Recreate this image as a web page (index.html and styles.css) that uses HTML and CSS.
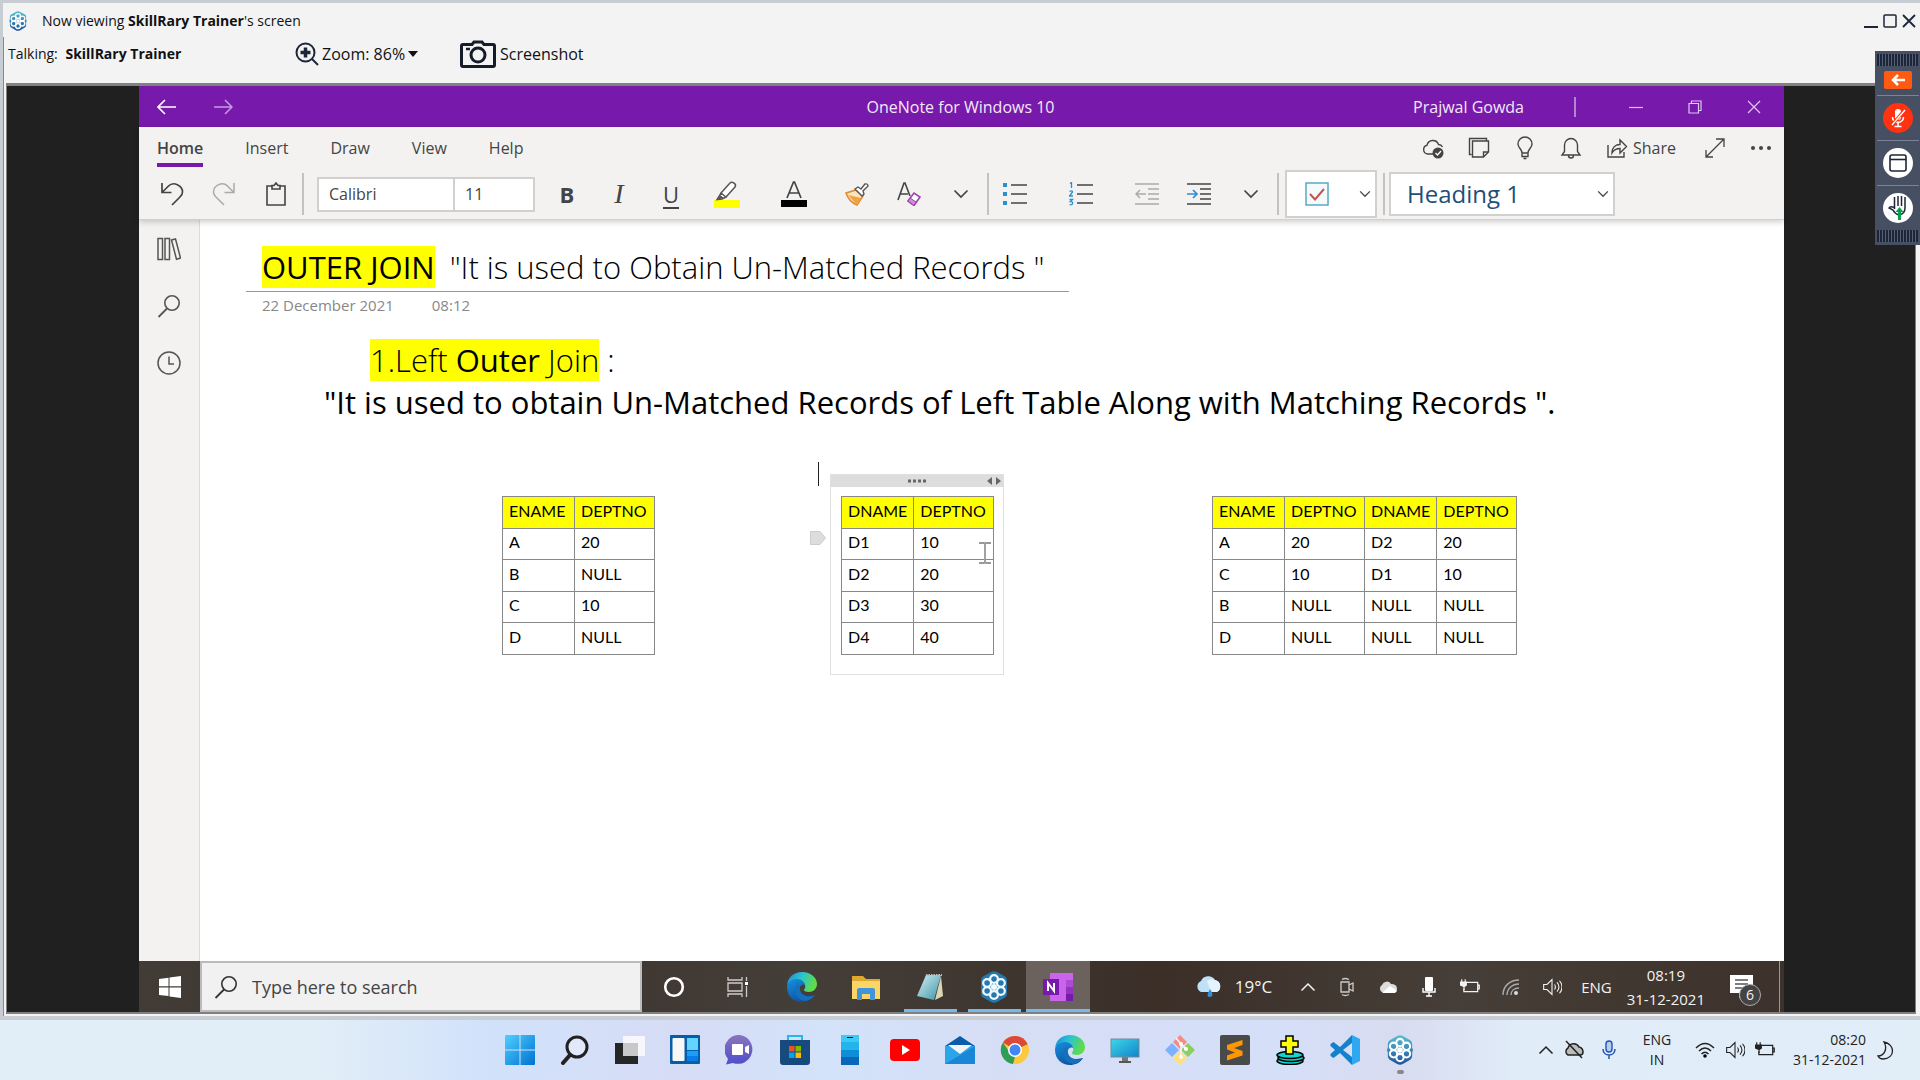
FILE: index.html
```html
<!DOCTYPE html>
<html lang="en">
<head>
<meta charset="utf-8">
<title>Now viewing SkillRary Trainer's screen</title>
<link rel="stylesheet" href="styles.css">
</head>
<body>
<svg class="defs" aria-hidden="true">
  <defs>
    <linearGradient id="edgeA" x1="0" y1="0" x2="1" y2="0.3"><stop offset="0" stop-color="#1d86d8"/><stop offset=".5" stop-color="#2bc3d2"/><stop offset="1" stop-color="#5fdc4a"/></linearGradient>
    <linearGradient id="edgeB" x1="0" y1="0" x2="0.6" y2="1"><stop offset="0" stop-color="#1490df"/><stop offset="1" stop-color="#0f4f9c"/></linearGradient>
    <linearGradient id="win" x1="0" y1="0" x2="1" y2="1"><stop offset="0" stop-color="#4fd0ff"/><stop offset="1" stop-color="#0071d0"/></linearGradient>
    <linearGradient id="chat" x1="0" y1="0" x2="0" y2="1"><stop offset="0" stop-color="#8a74bd"/><stop offset="1" stop-color="#4f4fcb"/></linearGradient>
    <linearGradient id="screen" x1="0" y1="0" x2="1" y2="1"><stop offset="0" stop-color="#3fd6e6"/><stop offset="1" stop-color="#0f84cd"/></linearGradient>
    <linearGradient id="hiveG" x1="0" y1="0" x2="0" y2="1"><stop offset="0" stop-color="#58bfd2"/><stop offset="1" stop-color="#1f519c"/></linearGradient>
    <linearGradient id="pad" x1="0" y1="0" x2="1" y2="1"><stop offset="0" stop-color="#d5f1f3"/><stop offset="1" stop-color="#3a93a8"/></linearGradient>
    <symbol id="chev" viewBox="0 0 16 10"><path d="M1.500 1.500 8 8l6.500-6.500" fill="none" stroke="currentColor" stroke-width="1.700"/></symbol>
    <symbol id="up" viewBox="0 0 16 10"><path d="M1.500 8.500 8 2l6.500 6.500" fill="none" stroke="currentColor" stroke-width="1.500"/></symbol>
    <symbol id="lens" viewBox="0 0 24 24"><circle cx="15" cy="9" r="7.200" fill="none" stroke="currentColor" stroke-width="1.600"/><path d="M10 14.500 1.500 23" stroke="currentColor" stroke-width="1.800"/></symbol>
    <symbol id="petals" viewBox="0 0 32 32"><g fill="none" stroke="currentColor" stroke-width="2.200"><circle cx="16" cy="8" r="3.900"/><circle cx="22.900" cy="12" r="3.900"/><circle cx="22.900" cy="20" r="3.900"/><circle cx="16" cy="24" r="3.900"/><circle cx="9.100" cy="20" r="3.900"/><circle cx="9.100" cy="12" r="3.900"/></g><circle cx="16" cy="16" r="3" fill="currentColor"/></symbol>
    <symbol id="hive" viewBox="0 0 32 32"><path d="M13 1q3-1.500 6 0l8 4.500q2 1.500 2 4v4l1 2.500-1 2.500v4q0 2.500-2 4L19 31q-3 1.500-6 0l-8-4.500q-2-1.500-2-4v-4L2 16l1-2.500v-4q0-2.500 2-4z" fill="url(#hiveG)"/><use href="#petals" color="#fff"/></symbol>
    <symbol id="edge" viewBox="0 0 32 32"><path d="M1 14C2 6 8 1 16 1c9 0 15 6 15 12 0 5-4 8-8 8-3 0-5-1-5-2 0-1 2-2 1-5-1-2-4-4-8-4-5 0-9 2-10 4z" fill="url(#edgeA)"/><path d="M1 16c0-4 4-8 10-8 4 0 8 3 8 6-2-1-4 0-5 2-1 4 2 9 8 9 3 0 6-1 7-1-3 5-8 7-13 7C8 31 1 25 1 16z" fill="url(#edgeB)"/><path d="M12 13c-6 5-3 15 7 17 4-.6 8-3 10-6-2 1-4 1.600-7 1.400-6-.4-10-6-8-10z" fill="#1470bd"/></symbol>
    <symbol id="speaker" viewBox="0 0 24 24"><path d="M2 9h4l6-6v18l-6-6H2zM15 9c1.500 2 1.500 4 0 6M18 6.500c3 3.500 3 7.500 0 11M21 4.500c4 4.500 4 10.500 0 15" fill="none" stroke="currentColor" stroke-width="1.300"/></symbol>
    <symbol id="battery" viewBox="0 0 26 24"><path d="M8 6h15v12H5v-4M23 9.500h2v5h-2" fill="none" stroke="currentColor" stroke-width="1.600"/><path d="M0 5h1.500V2H3v3h3V2h1.500v3H9v5l-3 2v4H4.500v-4L0 10z" fill="currentColor"/></symbol>
  </defs>
</svg>

<main class="viewer">
  <header class="viewer-head">
    <div class="caption">
      <svg class="i20"><use href="#hive"/></svg>
      <p class="caption-text">Now viewing <b>SkillRary Trainer</b>'s screen</p>
      <div class="win-buttons">
        <button aria-label="Minimize"><svg viewBox="0 0 14 14"><path d="M0 13h14" stroke="#1d2638" stroke-width="2"/></svg></button>
        <button aria-label="Maximize"><svg viewBox="0 0 14 14"><rect x="1" y="1" width="12" height="12" rx="1" fill="none" stroke="#1d2638" stroke-width="1.500"/></svg></button>
        <button aria-label="Close"><svg viewBox="0 0 14 14"><path d="m1 1 12 12M13 1 1 13" stroke="#1d2638" stroke-width="1.800"/></svg></button>
      </div>
    </div>
    <div class="tools">
      <p class="talking">Talking: <b>SkillRary Trainer</b></p>
      <button class="tool zoom"><svg width="24" height="24" viewBox="0 0 24 24"><circle cx="10.500" cy="10.500" r="9" fill="none" stroke="#1d2638" stroke-width="2"/><path d="M10.500 5.500v10M5.500 10.500h10" stroke="#1d2638" stroke-width="3.500"/><path d="m17 17 6 6" stroke="#1d2638" stroke-width="2"/></svg>Zoom: 86%<svg width="10" height="6" viewBox="0 0 10 6"><path d="M0 0h10L5 6z" fill="#111"/></svg></button>
      <button class="tool"><svg width="36" height="28" viewBox="0 0 36 28"><path d="M3 4.500h9L14 2h8l2 2.500h9q1.500 0 1.500 1.500v19q0 1.500-1.500 1.500H3q-1.500 0-1.500-1.500V6Q1.500 4.500 3 4.500z" fill="none" stroke="#151d2b" stroke-width="3"/><circle cx="18" cy="15" r="7" fill="none" stroke="#151d2b" stroke-width="3"/><path d="M6 9h4" stroke="#151d2b" stroke-width="2.500"/></svg>Screenshot</button>
    </div>
  </header>

  <section class="stage">
    <div class="remote">
      <header class="titlebar">
        <div class="nav">
          <button aria-label="Back"><svg class="i20" viewBox="0 0 20 20"><path d="M19 10H1.500M8 3 1 10l7 7" fill="none" stroke="#fff" stroke-width="1.600"/></svg></button>
          <button aria-label="Forward"><svg class="i20" viewBox="0 0 20 20"><path d="M1 10h17.500M12 3l7 7-7 7" fill="none" stroke="#c99be6" stroke-width="1.500"/></svg></button>
        </div>
        <h1>OneNote for Windows 10</h1>
        <div class="account">
          <span class="user">Prajwal Gowda</span>
          <button aria-label="Minimize"><svg class="i14" viewBox="0 0 14 14"><path d="M0 7.500h14" stroke="#d9bdec" stroke-width="1.200"/></svg></button>
          <button aria-label="Restore"><svg class="i14" viewBox="0 0 14 14"><path d="M1 3.500h9.500V13H1zM3.500 3V1H13v9.500h-2" fill="none" stroke="#e0c8f0" stroke-width="1.200"/></svg></button>
          <button aria-label="Close"><svg class="i14" viewBox="0 0 14 14"><path d="m1 1 12 12M13 1 1 13" stroke="#e0c8f0" stroke-width="1.200"/></svg></button>
        </div>
      </header>

      <div class="ribbon">
        <div class="tabs">
          <nav>
            <a class="on" href="#home">Home</a><a href="#insert">Insert</a><a href="#draw">Draw</a><a href="#view">View</a><a href="#help">Help</a>
          </nav>
          <div class="actions">
            <button aria-label="Sync"><svg class="i24" viewBox="0 0 24 24"><path d="M12 18H6.500A4.500 4.500 0 0 1 6 9.200 6 6 0 0 1 17.500 8.500 4.500 4.500 0 0 1 21.500 11" fill="none" stroke="#444" stroke-width="1.400"/><circle cx="17" cy="17" r="5.500" fill="#444"/><path d="m14.500 17 2 2 3.500-4" fill="none" stroke="#fff" stroke-width="1.300"/></svg></button>
            <button aria-label="Feed"><svg class="i24" viewBox="0 0 24 24"><path d="M4.500 18.500h-2v-16h17v2M5.500 5h16v11l-5 5h-11zM21.500 16h-5v5" fill="none" stroke="#444" stroke-width="1.400"/></svg></button>
            <button aria-label="Tips"><svg class="i24" viewBox="0 0 24 24"><path d="M9 17c0-4-4-5-4-9a7 7 0 0 1 14 0c0 4-4 5-4 9zM9 17v3.500h6V17M10.500 22.500h3" fill="none" stroke="#444" stroke-width="1.400"/></svg></button>
            <button aria-label="Notifications"><svg class="i24" viewBox="0 0 24 24"><path d="M3 19h18l-2.500-3.500V9a6.500 6.500 0 0 0-13 0v6.500zM9.500 19.500a2.500 2.500 0 0 0 5 0" fill="none" stroke="#444" stroke-width="1.400"/></svg></button>
            <button class="share"><svg class="i24" viewBox="0 0 24 24"><path d="M3 9v12h16v-5M7 17c0-6 4-8.500 8-8.500V4l6.500 6.500L15 17v-4.500c-3 0-6 1-8 4.500z" fill="none" stroke="#444" stroke-width="1.400"/></svg>Share</button>
            <button aria-label="Full screen"><svg class="i24" viewBox="0 0 24 24"><path d="M3 21 21 3M13 3h8v8M3 14v7h7" fill="none" stroke="#444" stroke-width="1.300"/></svg></button>
            <button aria-label="More"><svg class="i24" viewBox="0 0 24 24"><g fill="#444"><circle cx="4" cy="12" r="2"/><circle cx="12" cy="12" r="2"/><circle cx="20" cy="12" r="2"/></g></svg></button>
          </div>
        </div>
        <div class="commands">
          <button class="c" aria-label="Undo"><svg class="i24" viewBox="0 0 24 24"><path d="M2 1v9.500h9.500M2.500 10l6-6c5-5 14-.5 14 6 0 3-1.500 4-3 5.500L12 23" fill="none" stroke="#444" stroke-width="1.700"/></svg></button>
          <button class="c" aria-label="Redo"><svg class="i24" viewBox="0 0 24 24"><path d="M22 1v9.500h-9.500M21.500 10l-6-6c-5-5-14-.5-14 6 0 3 1.500 4 3 5.500L12 23" fill="none" stroke="#aaa" stroke-width="1.500"/></svg></button>
          <button class="c" aria-label="Paste"><svg class="i24" viewBox="0 0 24 24"><path d="M8 4H3v19h18V4h-5M8 7V3.500h2L12 1l2 2.500h2V7z" fill="none" stroke="#444" stroke-width="1.600"/></svg></button>
          <span class="sep"></span>
          <div class="font"><input class="face" value="Calibri" aria-label="Font"><input class="size" value="11" aria-label="Font size"></div>
          <button class="c bold">B</button>
          <button class="c italic">I</button>
          <button class="c under">U</button>
          <button class="c w60" aria-label="Highlight"><svg class="i28" viewBox="0 0 28 28"><path d="M1 20h26v8H1z" fill="#ff0"/><path d="m8 13 9-10c2-2 7 1 5 4l-9 10zM8 13l5 4-4 2-5 .5z" fill="#fff" stroke="#555" stroke-width="1.500"/><path d="m7 15 4 3-6 1.500z" fill="#555"/></svg></button>
          <button class="c w72 color" aria-label="Font color"><svg class="i28" viewBox="0 0 28 28"><path d="M1 20h26v7H1z"/><path d="M7 18 13.500 2h1L21 18M9.500 13h9" fill="none" stroke="#444" stroke-width="1.700"/></svg></button>
          <button class="c" aria-label="Format painter"><svg class="i24" viewBox="0 0 24 24"><path d="m1 11 10-3 7 6-6 9c-5-2-9-6-11-12z" fill="#fbe3bd" stroke="#e08a2c" stroke-width="1.600"/><path d="m3 13 13 3-4 7z" fill="#f3a23c"/><path d="m10 7 3-2 3 2 4-5q3-.5 3 2l-5 5 1 3-2 2z" fill="#fff" stroke="#555" stroke-width="1.400"/></svg></button>
          <button class="c" aria-label="Clear formatting"><svg class="i24" viewBox="0 0 24 24"><path d="M1 18 7 1h1l5 13M3.500 12H11" fill="none" stroke="#444" stroke-width="1.600"/><path d="m11 19 6-8 6 4-6 8.500z" fill="#fff" stroke="#9b3fae" stroke-width="1.600"/><path d="m13 16 6 4-2 3.500-6-4.500z" fill="#cc8fd8" stroke="#9b3fae"/></svg></button>
          <button class="c" aria-label="More font options"><svg class="chev"><use href="#chev"/></svg></button>
          <span class="sep"></span>
          <button class="c" aria-label="Bullets"><svg class="i24" viewBox="0 0 24 24"><path d="M0 1h4v4H0zM0 10h4v4H0zM0 19h4v4H0z" fill="#2b8fd0"/><path d="M8 3h16M8 12h16M8 21h16" stroke="#444" stroke-width="1.600"/></svg></button>
          <button class="c w80" aria-label="Numbering"><svg class="i24" viewBox="0 0 24 24"><path d="M1 1.500 2.500.5V6M.5 9.500q3-1.500 3 .5L.5 14h3.500M.5 17.500h3l-2 2q2.500 0 2 2t-3 1" fill="none" stroke="#2b8fd0" stroke-width="1.300"/><path d="M8 3h16M8 12h16M8 21h16" stroke="#444" stroke-width="1.600"/></svg></button>
          <button class="c" aria-label="Decrease indent"><svg class="i24" viewBox="0 0 24 24"><path d="M0 2h24M13 7h11M13 12h11M13 17h11M0 22h24M11 12H1M5 8l-4 4 4 4" fill="none" stroke="#aaa" stroke-width="1.500"/></svg></button>
          <button class="c" aria-label="Increase indent"><svg class="i24" viewBox="0 0 24 24"><path d="M0 2h24M13 7h11M13 12h11M13 17h11M0 22h24" stroke="#444" stroke-width="1.600"/><path d="M0 12h10M6 8l4 4-4 4" fill="none" stroke="#2b8fd0" stroke-width="1.700"/></svg></button>
          <button class="c" aria-label="More paragraph options"><svg class="chev"><use href="#chev"/></svg></button>
          <span class="sep"></span>
          <button class="todo" aria-label="To do tag"><svg class="i24" viewBox="0 0 24 24"><path d="M1 1h22v22H1z" fill="#f5fbfd" stroke="#5aa9c4" stroke-width="1.500"/><path d="m5 12 5 5.500L19 7" fill="none" stroke="#c9504c" stroke-width="2"/></svg><svg class="chev small"><use href="#chev"/></svg></button>
          <span class="sep"></span>
          <div class="style-box"><select aria-label="Paragraph style"><option>Heading 1</option></select><svg class="chev small"><use href="#chev"/></svg></div>
        </div>
      </div>

      <div class="workspace">
        <aside class="rail">
          <button aria-label="Notebooks"><svg class="i24" viewBox="0 0 24 24"><path d="M1 1.500h4.500v21H1zM8 1.500h4.500v21H8zM14.500 3 18.500 2l5 19-4 1.300z" fill="none" stroke="#555" stroke-width="1.500"/></svg></button>
          <button aria-label="Search"><svg class="i24"><use href="#lens"/></svg></button>
          <button aria-label="Recent"><svg class="i24" viewBox="0 0 24 24"><circle cx="12" cy="12" r="11" fill="none" stroke="#555" stroke-width="1.500"/><path d="M12 5.500V13h5" fill="none" stroke="#555" stroke-width="1.500"/></svg></button>
        </aside>
        <article class="page">
          <h2 class="title"><mark>OUTER JOIN</mark><span>"It is used to Obtain Un-Matched Records "</span></h2>
          <p class="stamp"><span>22 December 2021</span><span>08:12</span></p>
          <h3 class="sub"><mark>1.Left <b>Outer</b> Join</mark> :</h3>
          <p class="lead">"It is used to obtain Un-Matched Records of Left Table Along with Matching Records ".</p>
          <div class="tables">
            <table>
              <tr class="hl"><th>ENAME</th><th>DEPTNO</th></tr>
              <tr><td>A</td><td>20</td></tr><tr><td>B</td><td>NULL</td></tr><tr><td>C</td><td>10</td></tr><tr><td>D</td><td>NULL</td></tr>
            </table>
            <div class="note">
              <div class="note-bar"><svg width="20" height="4" viewBox="0 0 20 4"><path d="M1 .5h3v3H1zM6 .5h3v3H6zM11 .5h3v3h-3zM16 .5h3v3h-3z" fill="#666"/></svg><svg class="arrows" width="16" height="8" viewBox="0 0 16 8"><path d="M6 0v8L1 4zM10 0v8l5-4z" fill="#666"/></svg></div>
              <table>
                <tr class="hl"><th>DNAME</th><th>DEPTNO</th></tr>
                <tr><td>D1</td><td>10</td></tr><tr><td>D2</td><td>20</td></tr><tr><td>D3</td><td>30</td></tr><tr><td>D4</td><td>40</td></tr>
              </table>
              <span class="caret"></span>
              <svg class="handle" width="16" height="14" viewBox="0 0 16 14"><path d="M.5.5H10l5.500 6.500-5.500 6.500H.500z" fill="#ddd" stroke="#ccc"/></svg>
              <svg class="beam" width="12" height="22" viewBox="0 0 12 22"><path d="M0 1h5l1 1 1-1h5M0 21h5l1-1 1 1h5M6 2v18" fill="none" stroke="#999" stroke-width="1.800"/></svg>
            </div>
            <table>
              <tr class="hl"><th>ENAME</th><th>DEPTNO</th><th>DNAME</th><th>DEPTNO</th></tr>
              <tr><td>A</td><td>20</td><td>D2</td><td>20</td></tr><tr><td>C</td><td>10</td><td>D1</td><td>10</td></tr><tr><td>B</td><td>NULL</td><td>NULL</td><td>NULL</td></tr><tr><td>D</td><td>NULL</td><td>NULL</td><td>NULL</td></tr>
            </table>
          </div>
        </article>
      </div>

      <footer class="bar10">
        <button class="start" aria-label="Start"><svg width="22" height="22" viewBox="0 0 22 22"><path d="M0 3l9.500-1.300v8.600H0zM10.500 1.500 22 0v10.300H10.500zM0 11.500h9.500v8.600L0 19zM10.500 11.500H22V22l-11.500-1.500z" fill="#fff"/></svg></button>
        <label class="search"><svg class="i24"><use href="#lens"/></svg><input placeholder="Type here to search" aria-label="Type here to search"></label>
        <div class="pins">
          <button aria-label="Cortana"><svg class="i24" viewBox="0 0 24 24"><circle cx="12" cy="12" r="8.800" fill="none" stroke="#fff" stroke-width="2.600"/></svg></button>
          <button aria-label="Task view"><svg class="i24" viewBox="0 0 24 24"><path d="M2 2v3h14V2M2 22v-3h14v3M2 8h14v8H2zM20.500 2v4M20.500 11v11" fill="none" stroke="#ccc" stroke-width="1.300"/><path d="M19 7h3v3h-3z" fill="#fff"/></svg></button>
          <button aria-label="Edge"><svg class="i32"><use href="#edge"/></svg></button>
          <button aria-label="File Explorer"><svg class="i28" viewBox="0 0 28 28"><path d="M0 3h11l3 3h14v19H0z" fill="#e0a92d"/><path d="M0 8h28v18H0z" fill="#fbd667"/><path d="M5 27V17q0-2 2-2h14q2 0 2 2v10h-5v-6h-8v6z" fill="#3f95dc"/></svg></button>
          <button class="run" aria-label="Notepad"><svg class="i28" viewBox="0 0 28 28"><path d="M10 2h15L18 27 1 23z" fill="url(#pad)"/><path d="m25 3 2 20-8 4z" fill="#ddd5b8"/><path d="M10 2h16" stroke="#bbb" stroke-width="2" stroke-dasharray="1.500 1"/></svg></button>
          <button class="run" aria-label="GoTo"><svg class="i32" viewBox="0 0 32 32"><path d="M13 1q3-1.500 6 0l8 4.500q2 1.500 2 4v13q0 2.500-2 4L19 31q-3 1.500-6 0l-8-4.500q-2-1.500-2-4v-13q0-2.500 2-4z" fill="#2678ad"/><use href="#petals" color="#effaff"/></svg></button>
          <button class="run active" aria-label="OneNote"><svg class="i32" viewBox="0 0 32 32"><path d="M8 2h23v28H8z" fill="#ca64ea"/><path d="M24 9h7v7h-7z" fill="#ae4bd5"/><path d="M24 16h7v7h-7z" fill="#9332bf"/><path d="M24 23h7v7h-7z" fill="#7719aa"/><path d="M1 8h16v16H1z" fill="#7719aa"/><path d="M6 20v-8l6 8v-8" fill="none" stroke="#fff" stroke-width="2"/></svg></button>
        </div>
        <div class="tray10">
          <button class="weather"><svg class="i28" viewBox="0 0 28 28"><path d="M6 19a6 6 0 0 1 0-11 8 8 0 0 1 14-1 6.500 6.500 0 0 1 2 12z" fill="#bfe1f8"/><path d="M12 8a8 8 0 0 1 8-1 6.500 6.500 0 0 1 2 12h-6z" fill="#e4f3fd"/><path d="M15 16q5 7 0 8t0-8z" fill="#2f8fdc"/></svg>19°C</button>
          <svg class="tick"><use href="#up"/></svg>
          <svg class="i20" viewBox="0 0 20 20"><path d="M4 5h8v10H4zM12 8l4-2v8l-4-2M5 2.500q3-2 7 0M5 17.500q3 2 7 0" fill="none" stroke="#ccc" stroke-width="1.300"/></svg>
          <svg class="i20" viewBox="0 0 20 20"><path d="M4 15a4 4 0 0 1 0-7 5 5 0 0 1 9-1q6 0 6 5 0 3-3 3z" fill="#ddd"/><path d="m4 16 8-7 7 5-2 2z" fill="#fff"/></svg>
          <svg class="i20" viewBox="0 0 20 20"><rect x="6" y="0" width="8" height="14" rx="1" fill="#fff"/><path d="M4 11v4h12v-4M10 15v4M7 19h6" fill="none" stroke="#fff" stroke-width="1.400"/></svg>
          <svg class="i20"><use href="#battery"/></svg>
          <svg class="i20" viewBox="0 0 20 20"><path d="M2 18C2 9 9 3 18 3M6 18c0-6 5-11 12-11M10 18c0-4 3-7 8-7" fill="none" stroke="#aaa" stroke-width="1.400"/><circle cx="15" cy="16" r="2" fill="#ddd"/></svg>
          <svg class="i20"><use href="#speaker"/></svg>
          <span>ENG</span>
          <time class="clock10">08:19<br>31-12-2021</time>
          <button class="inbox" aria-label="Notifications"><svg class="i24" viewBox="0 0 24 24"><path d="M0 0h23v18h-9l-5 5v-5H0z" fill="#fff"/><path d="M5 5h13M5 9h13M5 13h13" stroke="#555" stroke-width="1.300"/></svg><span class="badge">6</span></button>
        </div>
      </footer>
    </div>
  </section>
</main>

<aside class="panel" aria-label="Call controls">
  <span class="grip"></span>
  <button class="collapse" aria-label="Collapse"><svg width="14" height="12" viewBox="0 0 14 12"><path d="M14 6H2M7 1 2 6l5 5" fill="none" stroke="#fff" stroke-width="2.500"/></svg></button>
  <button class="round red" aria-label="Unmute"><svg class="i20" viewBox="0 0 20 20"><rect x="7" y="1" width="6" height="11" rx="3" fill="#fff"/><path d="M4.500 9c0 7 11 7 11 0M10 14v4M6.500 18.500h7" fill="none" stroke="#fff" stroke-width="1.600"/><path d="M16.500 2 4 17" stroke="#ff3311" stroke-width="3"/><path d="M17 2 4 17" stroke="#fff" stroke-width="1.300"/></svg></button>
  <button class="round" aria-label="Window"><svg class="i20" viewBox="0 0 20 20"><rect x="2" y="2" width="16" height="16" rx="2" fill="none" stroke="#1d2638" stroke-width="1.600"/><path d="M2 6.500h16" stroke="#1d2638" stroke-width="1.600"/></svg></button>
  <button class="round" aria-label="Raise hand"><svg width="24" height="26" viewBox="0 0 24 26"><path d="M8.500 14V2M12 11V1M15.500 11V1M19 2v11q0 6-6 7-4-1-6-5l-4-2q1-2 5-.5" fill="none" stroke="#1d2638" stroke-width="1.500"/><path d="m13.500 12 4 5h-2.500v8h-3v-8H9.500z" fill="#0a9f4f"/></svg></button>
  <span class="grip"></span>
</aside>

<footer class="bar11">
  <div class="apps">
    <button aria-label="Start"><svg class="i30" viewBox="0 0 30 30"><path d="M0 1q0-1 1-1h13.500v14.500H0zM15.500 0H29q1 0 1 1v13.500H15.500zM0 15.500h14.500V30H1q-1 0-1-1zM15.500 15.500H30V29q0 1-1 1H15.500z" fill="url(#win)"/></svg></button>
    <button aria-label="Search"><svg class="i30" viewBox="0 0 30 30"><circle cx="17" cy="12" r="10" fill="#ffffff55" stroke="#222" stroke-width="3"/><path d="m10 20-7 8" stroke="#222" stroke-width="4" stroke-linecap="round"/></svg></button>
    <button aria-label="Task view"><svg class="i30" viewBox="0 0 30 30"><path d="M0 8h23v21H0z" fill="#262626"/><path d="M8 1h22v20H8z" fill="#fff" opacity=".75"/></svg></button>
    <button aria-label="Widgets"><svg class="i30" viewBox="0 0 30 30"><rect width="30" height="29" rx="1" fill="#075ea8"/><rect x="2.500" y="3" width="12" height="23" rx="1" fill="#f7f7f7"/><path d="M17 3h11v12H17z" fill="#64d3ff"/><path d="M17 16h11v5H17z" fill="#199ff5"/><path d="M17 21h11v5H17z" fill="#087fe8"/></svg></button>
    <button aria-label="Chat"><svg class="i30" viewBox="0 0 30 30"><path d="M15 0a14.500 14.500 0 1 1-7 28L1 29.500 3 24A14.500 14.500 0 0 1 15 0z" fill="url(#chat)"/><rect x="7" y="9" width="11" height="11" rx="1" fill="#fff"/><path d="m20 12 4-2v9l-4-2z" fill="#fff"/></svg></button>
    <button aria-label="Store"><svg class="i30" viewBox="0 0 30 30"><path d="M8 6V1h14v5" fill="none" stroke="#27b7ee" stroke-width="2"/><path d="M0 5h30v22q0 3-3 3H3q-3 0-3-3z" fill="#174b7e"/><path d="M9 11h5.500v5.500H9z" fill="#f25022"/><path d="M15.500 11H21v5.500h-5.500z" fill="#7fba00"/><path d="M9 17.500h5.500V23H9z" fill="#00a4ef"/><path d="M15.500 17.500H21V23h-5.500z" fill="#ffb900"/></svg></button>
    <button aria-label="Your Phone"><svg class="i30" viewBox="0 0 30 30"><path d="M6 0h18v7H6z" fill="#3fc8f4"/><path d="M6 7h18v8H6z" fill="#23b4ec"/><path d="M6 15h18v7H6z" fill="#0f8ed8"/><path d="M6 22h18v8H6z" fill="#0a66b8"/><path d="M12 2.500h6" stroke="#114"/></svg></button>
    <button aria-label="YouTube"><svg class="i30" viewBox="0 0 30 30"><rect y="4" width="30" height="22" rx="4" fill="#f00"/><path d="m12 10 8 5-8 5z" fill="#fff"/></svg></button>
    <button aria-label="Mail"><svg class="i30" viewBox="0 0 30 30"><path d="M0 11 15 1l15 10z" fill="#0a5cab"/><path d="M0 11h30v18H0z" fill="#2aa5ea"/><path d="M3 10h24l-12 9z" fill="#f3f3f5"/><path d="M0 29 30 11v18z" fill="#1a86d8"/></svg></button>
    <button aria-label="Chrome"><svg class="i30" viewBox="0 0 30 30"><circle cx="15" cy="15" r="14" fill="#fbc93b"/><path d="M15 15 3 7.500A14 14 0 0 1 27.500 9z" fill="#dc493a"/><path d="m15 15 12.500-6H15z" fill="#dc493a"/><path d="M3 7.500 10 18l5 4-2 7A14 14 0 0 1 3 7.500z" fill="#2f9d58"/><circle cx="15" cy="15" r="7" fill="#fff"/><circle cx="15" cy="15" r="5.500" fill="#4285f4"/></svg></button>
    <button aria-label="Edge"><svg class="i32"><use href="#edge"/></svg></button>
    <button aria-label="Remote desktop"><svg class="i30" viewBox="0 0 30 30"><path d="M12 22h6v5h-6z" fill="#777"/><path d="M9 26h12v2H9z" fill="#555"/><rect x="1" y="4" width="28" height="18" fill="url(#screen)" stroke="#758995"/></svg></button>
    <button aria-label="Git"><svg class="i30" viewBox="0 0 30 30"><path d="m15 0 7 7-7 7-7-7z" fill="#f68b85"/><path d="m23 8 7 7-7 7-7-7z" fill="#8bd05e"/><path d="m7 8 7 7-7 7-7-7z" fill="#7fb1ff"/><path d="m15 16 7 7-7 7-7-7z" fill="#ffe177"/><path d="m11 3 5 6v13M16 9l5 5" fill="none" stroke="#f7eef0" stroke-width="1.800"/><circle cx="16" cy="9" r="2" fill="#fff"/><circle cx="21" cy="14" r="2" fill="#fff"/><circle cx="16" cy="22" r="2" fill="#fff"/></svg></button>
    <button aria-label="Sublime Text"><svg class="i30" viewBox="0 0 30 30"><rect width="30" height="30" rx="2" fill="#4a4a4a"/><path d="m7 10 15.500-5v5L14 13l8.500 3v4.500L7 25.500v-5l8-3-8-3z" fill="#ff9800"/></svg></button>
    <button aria-label="SQL client"><svg class="i30" viewBox="0 0 30 30"><g fill="#12d5cf" stroke="#000" stroke-width="1.500"><ellipse cx="15" cy="26" rx="13" ry="3.500"/><ellipse cx="16" cy="23" rx="13" ry="3.500"/><ellipse cx="15" cy="20" rx="13" ry="3.500"/></g><path d="M11 1h7v5h5v6h-5v7h-7v-7H6V6h5z" fill="#ff0" stroke="#000" stroke-width="1.500"/></svg></button>
    <button aria-label="VS Code"><svg class="i30" viewBox="0 0 30 30"><path d="M22 0 10 12 3.500 7 .5 9v2L5 15 .5 19v2l3 2 6.500-5 12 12V22l-9-7 9-7z" fill="#1381cc"/><path d="m22 0 8 4v22l-8 4z" fill="#2fa8f2"/></svg></button>
    <button class="open" aria-label="GoTo"><svg class="i30"><use href="#hive"/></svg></button>
  </div>
  <div class="tray11">
    <svg class="tick"><use href="#up"/></svg>
    <svg class="i20" viewBox="0 0 20 20"><path d="M4 15a4 4 0 0 1 0-7 6 6 0 0 1 11-1q4 1 4 5 0 3-3 3z" fill="#bbb" stroke="#222" stroke-width="1.500"/><path d="m2 1 16 17" stroke="#222" stroke-width="1.500"/></svg>
    <svg class="i20 mic" viewBox="0 0 20 20"><rect x="7" y="1" width="6" height="11" rx="3" fill="#b9cdf3" stroke="#1f55b0" stroke-width="1.400"/><path d="M4 9c0 8 12 8 12 0M10 15v4" fill="none" stroke="#1f55b0" stroke-width="1.500"/></svg>
    <span class="lang">ENG<br>IN</span>
    <svg class="i20" viewBox="0 0 20 20"><path d="M1 8q9-9 18 0M4 11q6-6 12 0M6.500 14q3.500-3.500 7 0" fill="none" stroke="#222" stroke-width="1.500"/><circle cx="10" cy="16" r="1.800"/></svg>
    <svg class="i20"><use href="#speaker"/></svg>
    <svg class="i20"><use href="#battery"/></svg>
    <time class="clock11">08:20<br>31-12-2021</time>
    <svg class="i20" viewBox="0 0 20 20"><path d="M8 2c11 2 12 16-1 17-2 0-4-1-5-3 6 0 10-7 6-14z" fill="none" stroke="#222" stroke-width="1.300"/></svg>
  </div>
</footer>
</body>
</html>
```
FILE: styles.css
```css
* { box-sizing: border-box; }
body {
  margin: 0;
  min-height: 100vh;
  display: flex;
  flex-direction: column;
  font: 14px/20px "Open Sans", "Noto Sans", sans-serif;
  color: #111;
}
h1, h2, h3, p { margin: 0; font-weight: 400; }
button {
  padding: 0;
  border: 0;
  background: none;
  color: inherit;
  font: inherit;
  display: flex;
  align-items: center;
  justify-content: center;
}
a { color: inherit; text-decoration: none; }
svg { display: block; flex: none; }
.defs { position: absolute; width: 0; height: 0; }
.i14 { width: 14px; height: 14px; }
.i20 { width: 20px; height: 20px; }
.i24 { width: 24px; height: 24px; }
.i28 { width: 28px; height: 28px; }
.i30 { width: 30px; height: 30px; }
.i32 { width: 32px; height: 32px; }
.chev { width: 16px; height: 10px; color: #444; }
.chev.small { width: 12px; height: 8px; }
.tick { width: 16px; height: 10px; }

/* Viewer window */
.viewer {
  flex: 1;
  display: flex;
  flex-direction: column;
  border: solid #c8ccd3;
  border-width: 3px 0 4px 3px;
  background: linear-gradient(#d05cb4, #d05cb4) 0 34px / 1px 100% no-repeat #f3f3f3;
}
.viewer-head { padding: 5px 4px 0 5px; height: 80px; }
.caption { display: flex; align-items: center; height: 26px; gap: 14px; }
.win-buttons { margin-left: auto; display: flex; gap: 5px; }
.win-buttons svg { width: 14px; height: 14px; }
.tools { display: flex; align-items: center; height: 40px; }
.talking { width: 287px; }
.talking b { margin-left: 4px; }
.caption b, .talking b { font-weight: 700; }
.tool { gap: 4px; font-size: 16px; }
.zoom { width: 126px; margin-right: 39px; justify-content: flex-start; gap: 3px; }

.stage {
  flex: 1;
  display: flex;
  margin: 0 4px 2px 3px;
  padding: 0 131px 0 132px;
  border: solid #808080;
  border-width: 3px 1px 2px;
  background: #202020;
}
.remote { flex: 1; min-width: 0; display: flex; flex-direction: column; background: #fff; }

/* OneNote title bar */
.titlebar {
  display: grid;
  grid-template-columns: 1fr auto 1fr;
  align-items: center;
  height: 41px;
  padding: 0 20px 0 18px;
  background: #7719aa;
  color: #f3e8f9;
}
.titlebar h1 { font-size: 16px; }
.nav { display: flex; gap: 36px; }
.account { display: flex; align-items: center; justify-content: flex-end; gap: 45px; padding-right: 3px; font-size: 16px; }
.user { padding-right: 50px; border-right: 2px solid #b583d3; margin-right: 8px; }

/* Ribbon */
.ribbon {
  position: relative;
  background: #f3f2f1;
  border-bottom: 1px solid #d2d0ce;
  box-shadow: 0 2px 6px #0003;
  color: #444;
}
.tabs { display: flex; justify-content: space-between; height: 42px; padding: 0 11px 0 18px; }
.tabs nav { display: flex; gap: 42px; font-size: 16px; }
.tabs nav a { padding-top: 11px; height: 40px; }
.tabs .on { font-weight: 600; border-bottom: 4px solid #7719aa; }
.actions { display: flex; align-items: center; gap: 22px; font-size: 16px; }
.share { gap: 4px; margin-right: 5px; }
.commands { display: flex; align-items: center; height: 50px; padding-left: 7px; }
.c { width: 52px; height: 44px; font-size: 24px; line-height: 24px; }
.w60 { width: 60px; }
.w72 { width: 74px; }
.w80 { width: 80px; }
.bold { font-weight: 700; font-size: 22px; }
.italic { font-family: "Liberation Serif", serif; font-style: italic; font-size: 28px; }
.under { font-size: 22px; text-decoration: underline; text-decoration-thickness: 2px; text-underline-offset: 4px; }
.sep { width: 2px; height: 42px; background: #c4c2c0; }
.font { display: flex; height: 35px; margin: 0 6px 0 13px; border: 2px solid #d2d0ce; background: #fff; }
.font input { border: 0; padding: 0 10px; background: none; color: #444; font: inherit; font-size: 16px; }
.face { width: 134px; }
.font .size { width: 80px; border-left: 2px solid #d2d0ce; }
.todo { width: 92px; height: 48px; margin: 0 6px; border: 2px solid #d2d0ce; background: #fff; gap: 30px; padding-left: 14px; }
.style-box { position: relative; width: 226px; height: 44px; margin-left: 4px; }
.style-box select {
  appearance: none;
  width: 100%;
  height: 100%;
  border: 2px solid #d2d0ce;
  border-radius: 0;
  padding: 0 16px;
  background: #fff;
  color: #1f4e79;
  font: 24px/32px "Open Sans", sans-serif;
}
.style-box .chev { position: absolute; right: 6px; top: 18px; }

/* Page */
.workspace { flex: 1; display: flex; }
.rail {
  width: 61px;
  padding-top: 17px;
  background: #f3f2f1;
  border-right: 1px solid #dddbd9;
  display: flex;
  flex-direction: column;
  align-items: center;
  gap: 33px;
  color: #555;
}
.page { flex: 1; min-width: 0; padding: 26px 0 0 46px; color: #000; }
mark { background: #ff0; color: inherit; display: inline-block; }
.title {
  display: flex;
  gap: 15px;
  width: 823px;
  padding: 0 0 3px 16px;
  border-bottom: 1px solid #999;
  font-size: 31px;
  line-height: 42px;
  font-weight: 300;
  white-space: nowrap;
}
.title mark { font-weight: 400; }
.stamp { display: flex; gap: 38px; padding: 3px 0 0 16px; font-size: 15px; color: #888; }
.sub { margin: 24px 0 0 124px; font-size: 31px; line-height: 42px; font-weight: 300; }
.sub b { font-weight: 400; }
.lead { margin-left: 78px; font-size: 31px; line-height: 42px; white-space: nowrap; }
.tables { display: flex; align-items: flex-start; margin: 51px 0 0 256px; }
.tables > table { margin-top: 22px; }
table { border-collapse: collapse; table-layout: fixed; font: 16px/20px Lato, sans-serif; }
th, td { height: 32px; padding: 0 6px 4px; border: 1px solid #888; text-align: left; font-weight: 400; }
tr:nth-child(even) td { height: 31px; }
th:nth-child(odd) { width: 72px; }
th:nth-child(even) { width: 80px; }
.hl th { background: #ff0; }
.note { position: relative; margin: 0 208px 0 175px; width: 174px; height: 201px; border: 1px solid #e0e0e0; }
.note-bar { display: flex; align-items: center; justify-content: center; height: 12px; margin-bottom: 9px; background: #ddd; }
.note table { margin-left: 10px; }
.arrows { position: absolute; right: 1px; top: 2px; }
.caret { position: absolute; left: -13px; top: -13px; width: 1px; height: 24px; background: #222; }
.handle { position: absolute; left: -21px; top: 56px; }
.beam { position: absolute; right: 12px; top: 67px; }

/* Windows 10 taskbar inside the shared screen */
.bar10 { display: flex; height: 51px; background: linear-gradient(90deg, #423c36, #3b322c 20%, #443e39 40%, #3b2f28 62%, #463e38 80%, #3d312b); color: #f3f3f3; }
.start { width: 61px; }
.search {
  width: 442px;
  display: flex;
  align-items: center;
  gap: 14px;
  padding-left: 12px;
  border: 2px solid #bbb;
  background: #f1f1f1;
  color: #333;
}
.search input { flex: 1; min-width: 0; border: 0; padding: 0; background: none; font: 18px/24px "Open Sans", sans-serif; }
.search input::placeholder { color: #444; }
.pins { display: flex; }
.pins button { width: 64px; }
.pins .run { background: linear-gradient(#76b9ed, #76b9ed) center bottom / 53px 3px no-repeat; }
.pins .run.active { background-color: #6b625d; background-size: 100% 3px; }
.tray10 { margin-left: auto; display: flex; align-items: center; gap: 21px; padding-right: 25px; border-right: 1px solid #999; margin-right: 4px; }
.weather { gap: 12px; font-size: 17px; margin-right: 7px; }
.tray10 > span { font-size: 15px; margin-left: -2px; }
.clock10 { text-align: center; font-size: 15px; line-height: 24px; margin: 0 4px 0 -6px; }
.inbox { position: relative; }
.badge { position: absolute; left: 9px; top: 9px; width: 22px; height: 22px; border: 1px solid #aaa; border-radius: 50%; background: #444; font-size: 14px; line-height: 20px; }

/* Floating call controls */
.panel {
  position: absolute;
  right: 0;
  top: 51px;
  width: 45px;
  padding: 3px 2px;
  background: #475063;
  display: flex;
  flex-direction: column;
  align-items: center;
}
.grip { width: 100%; height: 12px; background: repeating-linear-gradient(90deg, #1d2638 0 2px, #566074 2px 3px); }
.collapse { width: 28px; height: 18px; margin: 5px 0 6px; border-radius: 2px; background: #ff5a12; }
.round { position: relative; width: 30px; height: 30px; margin: 8px 0 7px; border-radius: 50%; background: #fff; }
.round::before { content: ""; position: absolute; top: -8px; left: -6px; right: -6px; height: 1px; background: #79839a; }
.red { background: #ff3311; }

/* Windows 11 taskbar */
.bar11 {
  display: grid;
  grid-template-columns: 1fr auto 1fr;
  align-items: center;
  height: 60px;
  background: linear-gradient(90deg, #e1edf7, #e1edf7 17%, #d2e2fb 25%, #d6dcf5 35%, #d3e3fa 43%, #d6def5 52%, #d5dff8 67%, #d8dcf0 73%, #e0ecf8 79%, #e1eef8);
  color: #222;
}
.apps { grid-column: 2; display: flex; }
.apps button { position: relative; width: 55px; height: 60px; }
.open::after { content: ""; position: absolute; bottom: 6px; width: 7px; height: 4px; border-radius: 2px; background: #888; }
.tray11 { display: flex; align-items: center; justify-content: flex-end; gap: 10px; padding-right: 24px; }
.mic { margin-left: 5px; }
.lang { width: 56px; text-align: center; }
.clock11 { width: 81px; text-align: right; }
```
